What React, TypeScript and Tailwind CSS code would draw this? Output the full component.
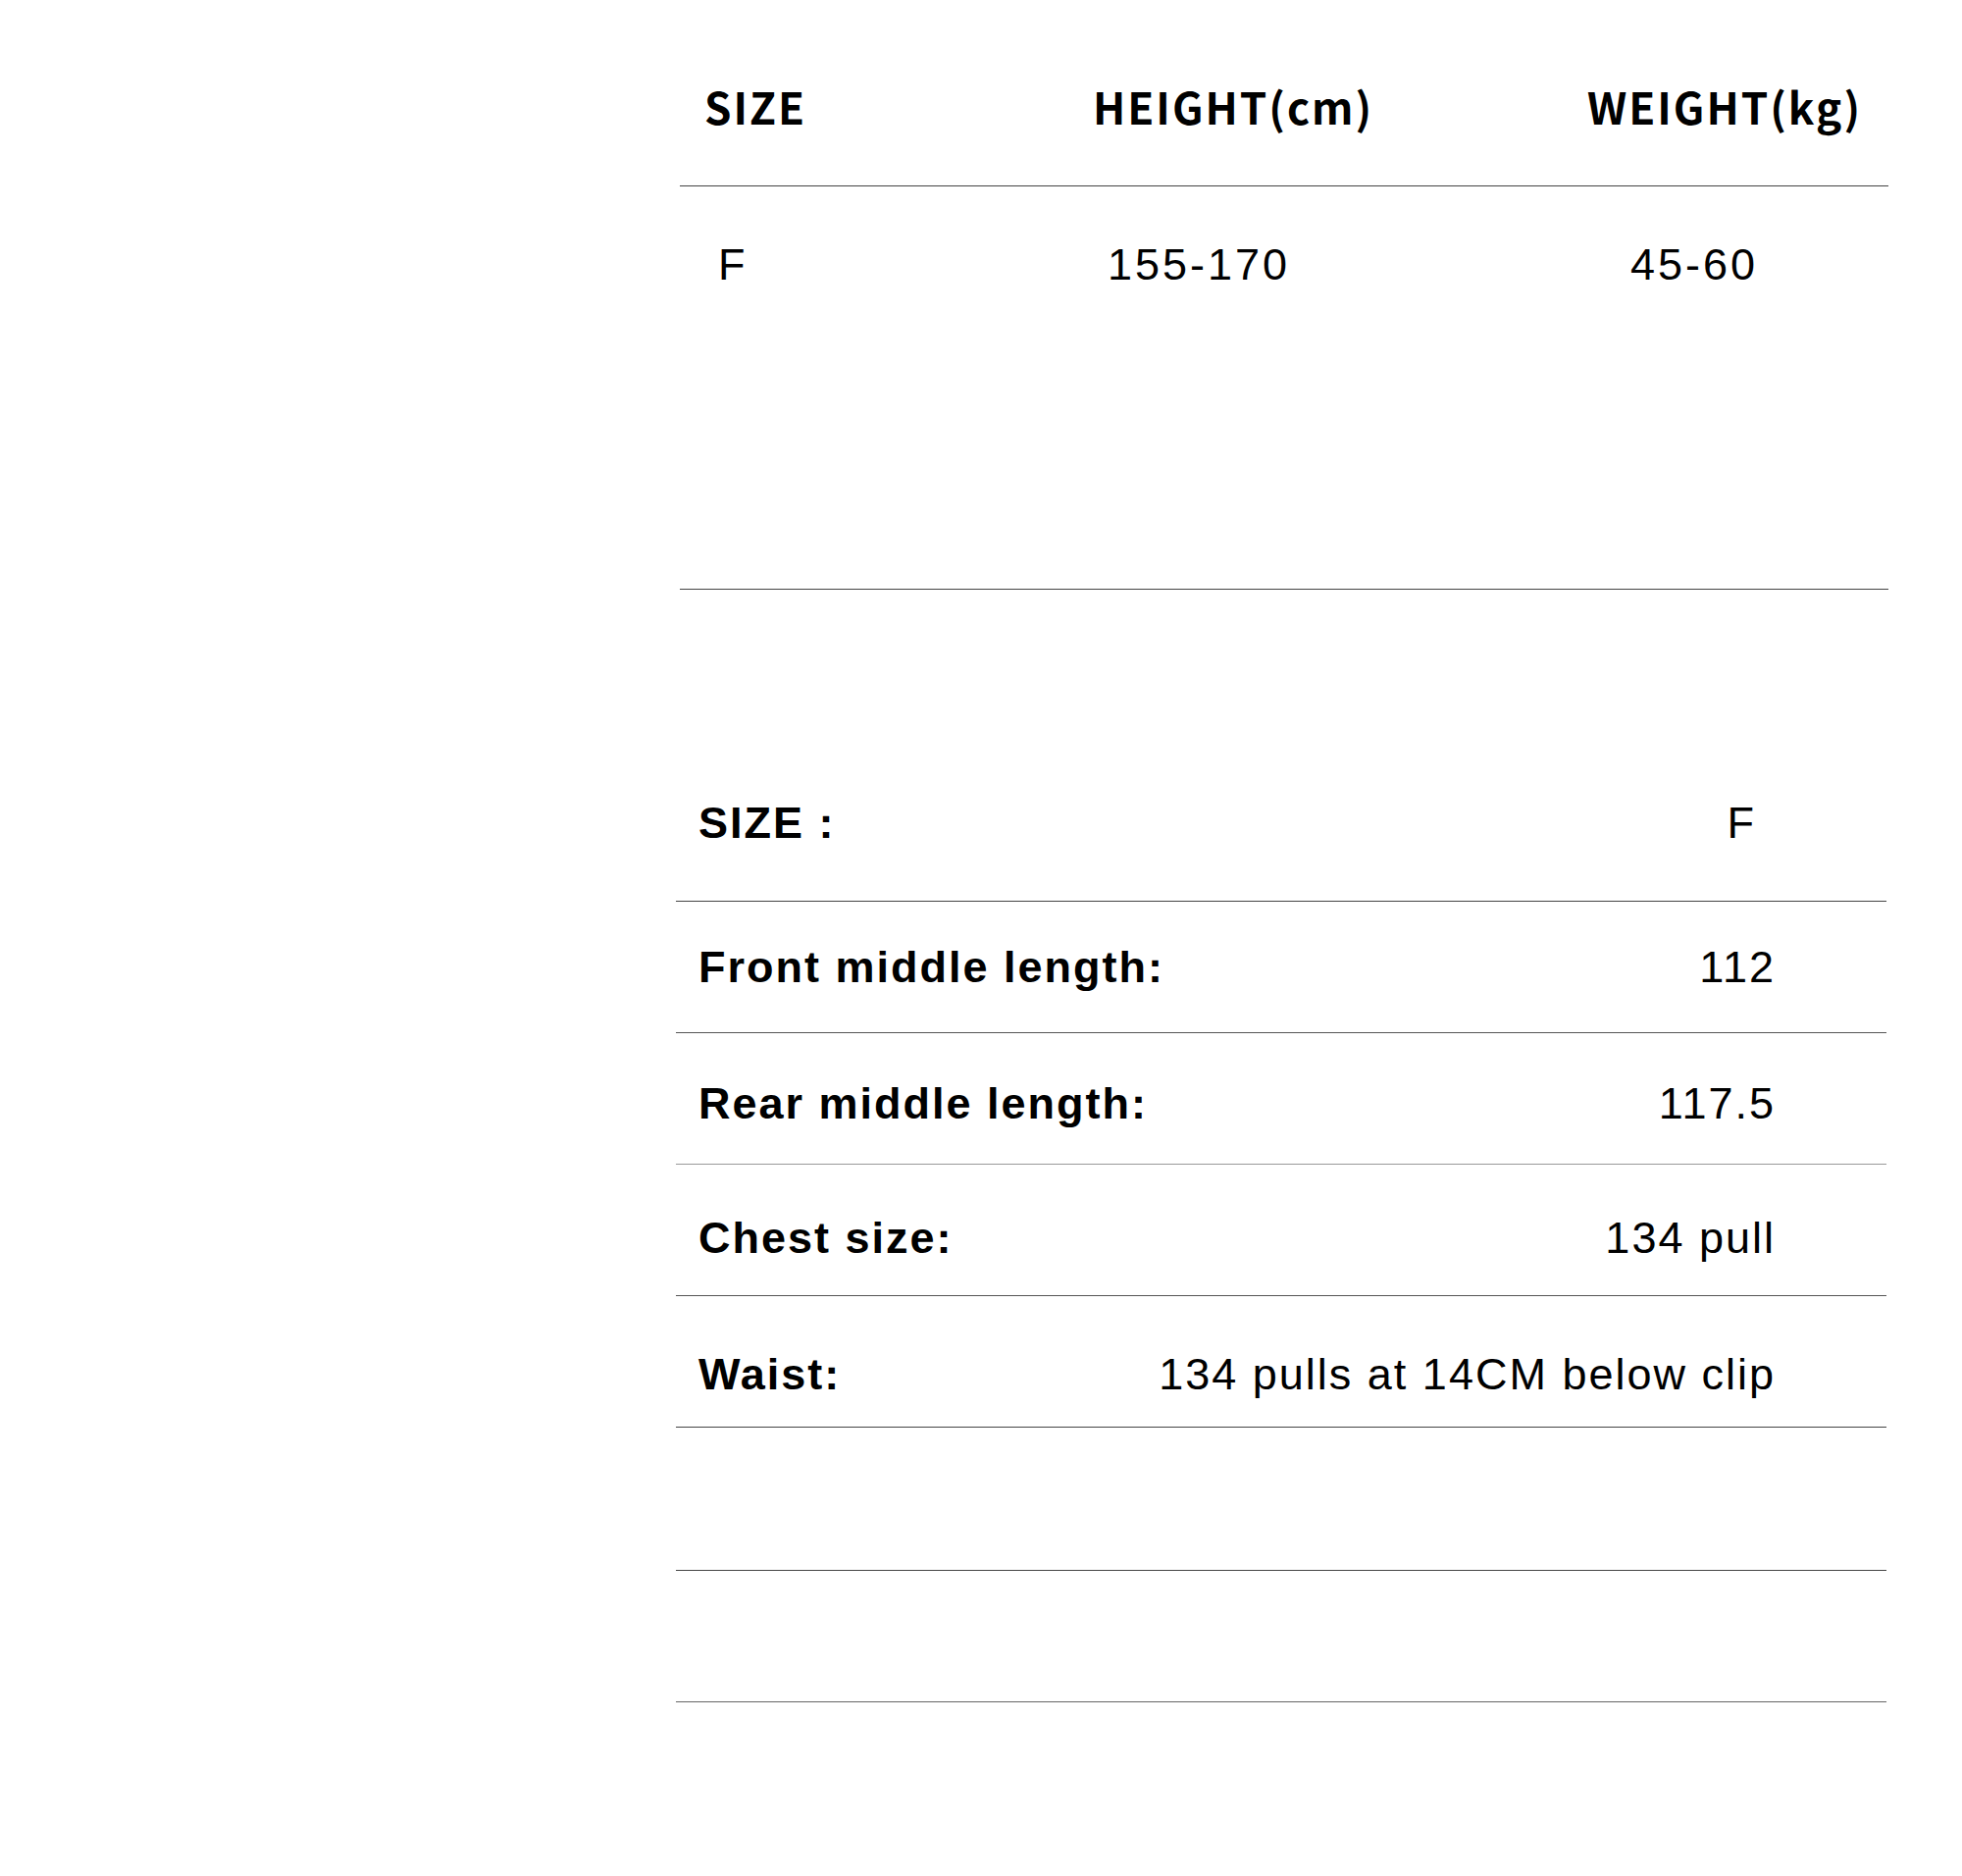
import React from "react";

const arial = { fontFamily: '"Liberation Sans", Arial, sans-serif' };

const measures = [
  { label: "Front middle length:", value: "112", pad: "pt-[44px] pb-[44px]", line: "border-[#555]" },
  { label: "Rear middle length:", value: "117.5", pad: "pt-[49px] pb-[39px]", line: "border-[#999]" },
  { label: "Chest size:", value: "134 pull", pad: "pt-[52px] pb-[36px]", line: "border-[#555]" },
  { label: "Waist:", value: "134 pulls at 14CM below clip", pad: "pt-[57px] pb-[31px]", line: "border-[#444]" },
];

const App = () => {
  return (
    <div className="w-[2000px] min-h-[1912px] bg-white text-black">
      {/* size table */}
      <div className="ml-[693px] w-[1232px]">
        <div
          className="grid grid-cols-[407px_500px_1fr] border-b border-[#444] pt-[86px] pb-[59px] text-[44px] font-bold leading-none tracking-[2px]"
          style={{ fontFamily: '"Noto Sans CJK SC", "Noto Sans", sans-serif' }}
        >
          <div className="pl-[25px]">SIZE</div>
          <div className="pl-[14px]">HEIGHT(cm)</div>
          <div className="pl-[18px]">WEIGHT(kg)</div>
        </div>
        <div
          className="grid grid-cols-[407px_500px_1fr] border-b border-[#444] pt-[57px] pb-[308px] text-[45px] leading-none tracking-[3px]"
          style={arial}
        >
          <div className="pl-[39px]">F</div>
          <div className="pl-[29px]">155-170</div>
          <div className="pl-[62px]">45-60</div>
        </div>
      </div>

      {/* measurements */}
      <div className="ml-[689px] mt-[171px] w-[1234px] text-[45px] leading-none tracking-[2px]" style={arial}>
        <div className="flex justify-between border-b border-[#444] pt-[44px] pb-[57px] pl-[23px] pr-[113px]">
          <span className="font-bold">SIZE :</span>
          <span className="mr-[20px]">F</span>
        </div>
        {measures.map((m) => (
          <div key={m.label} className={"flex justify-between border-b pl-[23px] pr-[113px] " + m.pad + " " + m.line}>
            <span className="font-bold">{m.label}</span>
            <span>{m.value}</span>
          </div>
        ))}
        <div className="h-[146px] border-b border-[#444]"></div>
        <div className="h-[134px] border-b border-[#666]"></div>
      </div>
    </div>
  );
};

export default App;
